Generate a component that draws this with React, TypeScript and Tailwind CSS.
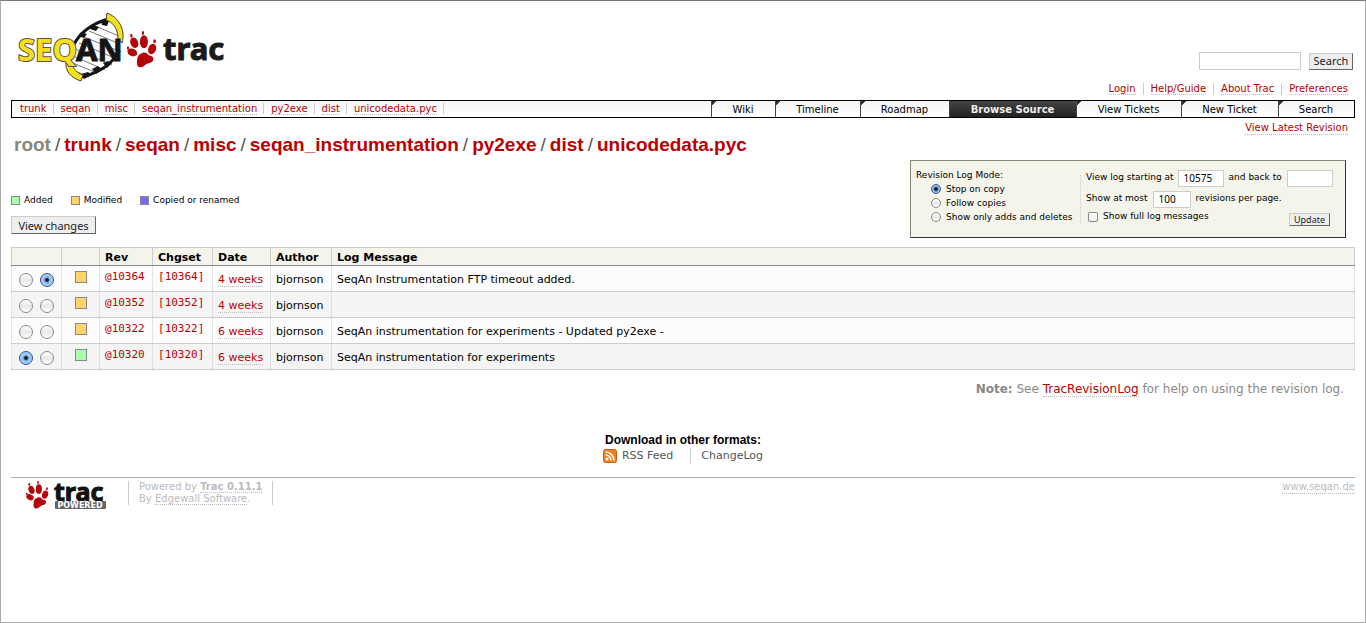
import React from "react";

const link =
  "text-[#b00] border-b border-dotted border-[#bbb] hover:bg-[#eee] hover:text-[#555]";

function Paw({ className }: { className: string }) {
  return (
    <svg viewBox="0 0 32 38" className={className} aria-hidden="true">
      <g fill="#b3060c">
        <path d="M17 22.500C20 21.500 22 23 23.500 25C27 25.500 29 27 28 30C26.500 33 24 32.500 21 34C18 37 15 38.500 12.500 36.500C10.500 34 11.500 32 11.500 29.500C11.500 26 13.500 23.500 17 22.500Z" />
        <ellipse cx="6.500" cy="22" rx="5.200" ry="3.800" transform="rotate(25 6.500 22)" />
        <ellipse cx="8.500" cy="12" rx="4" ry="5.600" transform="rotate(-20 8.500 12)" />
        <ellipse cx="18.500" cy="11" rx="4.200" ry="6.600" />
        <ellipse cx="27" cy="18.500" rx="4" ry="5.600" transform="rotate(20 27 18.500)" />
        <ellipse cx="2" cy="17.500" rx="1.200" ry="1.500" />
        <ellipse cx="5.500" cy="4.700" rx="1.200" ry="2" />
        <ellipse cx="17.500" cy="2" rx="1.200" ry="2" />
        <ellipse cx="29.500" cy="10.500" rx="1.300" ry="2" />
      </g>
    </svg>
  );
}

function SeqanLogo() {
  return (
    <svg viewBox="0 0 108 72" className="h-[72px] w-[108px]" role="img" aria-label="SeqAn">
      <path d="M50 50C54 34 70 14 91 8C105 24 105 44 84 58C74 64 63 67 56 64C50 60 49 56 50 50Z" fill="#fff" />
      <g stroke="#555" strokeWidth=".8" fill="none">
        <path d="M78 14L102 24M72 19L103 32M67 25L104 40M62 31L100 47M58 37L95 53M54 43L88 58M51 49L80 61M51 56L72 65" />
      </g>
      <path d="M91 7C74 12 62 22 56 34" fill="none" stroke="#151515" strokeWidth="3" />
      <path d="M75 13L82 15L79 19L73 17ZM64 20L70 22L67 26L61 24ZM84 9L92 9L90 14L85 13Z" fill="#151515" />
      <path d="M102 38C97 50 84 60 65 65" fill="none" stroke="#151515" strokeWidth="3" />
      <path d="M64 62L71 60L75 63L67 67ZM75 57L81 54L85 58L79 62ZM86 51L91 49L95 51L90 56Z" fill="#151515" />
      <path d="M90 1C101 5 109 17 105 31L101 27C101 19 98 11 89 8Z" fill="#f8df1b" stroke="#444" strokeWidth="1" />
      <path d="M49 50C48 59 54 66 64 69L66 63C60 61 56 57 54 49Z" fill="#f8df1b" stroke="#444" strokeWidth="1" />
      <text x="1" y="49" fontFamily="Noto Sans, sans-serif" fontWeight="700" fontSize="31" fill="#f8df1b" stroke="#555" strokeWidth="2" paintOrder="stroke">SEQ</text>
      <text x="59" y="49" fontFamily="Noto Sans, sans-serif" fontWeight="700" fontSize="31" fill="#151515" stroke="#151515" strokeWidth="1">AN</text>
    </svg>
  );
}

function Radio({ name, label, checked, small }: { name: string; label: string; checked?: boolean; small?: boolean }) {
  return (
    <input
      type="radio"
      name={name}
      aria-label={label}
      defaultChecked={checked}
      className={
        (small ? "size-[10px] " : "size-[14px] ") +
        "shrink-0 appearance-none rounded-full border border-[#8a8a8a] bg-linear-to-b from-white via-[#e8e8e8] to-white checked:border-[#3a4f9c] checked:bg-[radial-gradient(circle,#111_0_1px,#8dc3f5_3px,#b4dcff_100%)]"
      }
    />
  );
}

const crumbs = ["trunk", "seqan", "misc", "seqan_instrumentation", "py2exe", "dist", "unicodedata.pyc"];
const meta = ["Login", "Help/Guide", "About Trac", "Preferences"];
const tabs = [
  { name: "Wiki", width: "w-16" },
  { name: "Timeline", width: "w-[85px]" },
  { name: "Roadmap", width: "w-[89px]" },
  { name: "Browse Source", width: "w-[127px]" },
  { name: "View Tickets", width: "w-[105px]" },
  { name: "New Ticket", width: "w-[97px]" },
  { name: "Search", width: "w-[76px]" },
];
const legend = [
  { name: "Added", color: "bg-[#afa]" },
  { name: "Modified", color: "bg-[#ffd56a]" },
  { name: "Copied or renamed", color: "bg-[#76f]" },
];
const rows = [
  { rev: "10364", age: "4 weeks", msg: "SeqAn Instrumentation FTP timeout added.", color: "bg-[#ffd56a]" },
  { rev: "10352", age: "4 weeks", msg: "", color: "bg-[#ffd56a]" },
  { rev: "10322", age: "6 weeks", msg: "SeqAn instrumentation for experiments - Updated py2exe -", color: "bg-[#ffd56a]" },
  { rev: "10320", age: "6 weeks", msg: "SeqAn instrumentation for experiments", color: "bg-[#afa]" },
];
const modes = ["Stop on copy", "Follow copies", "Show only adds and deletes"];
const button =
  "border border-[#ccc] border-r-[#666] border-b-[#666] bg-[#eee] text-[#222] font-['Noto_Sans',sans-serif] hover:bg-[#ddd]";
const field = "border border-[#ccc] bg-white font-['Noto_Sans',sans-serif] text-[10px] outline-none";
const cell = "border-x border-dotted border-[#ccc] px-[5px]";

export default function App() {
  return (
    <div className="min-h-screen border border-[#aaa] border-t-[#777] bg-white px-[10px] font-['DejaVu_Sans',Verdana,sans-serif] text-[11px] text-black">
      <header>
        <div className="flex h-[78px] items-start justify-between pt-[11px]">
          <a href="#home" className="flex items-start pl-[6px]">
            <SeqanLogo />
            <Paw className="mt-[19px] ml-[1px] h-[37px] w-[31px]" />
            <svg viewBox="0 0 72 48" className="mt-[14px] ml-[5px] h-[48px] w-[72px]" role="img" aria-label="trac">
              <text x="1" y="34" fontFamily="Noto Sans, sans-serif" fontWeight="700" fontSize="31" fill="#1a1a1a" stroke="#1a1a1a" strokeWidth="1">trac</text>
            </svg>
          </a>
          <form className="flex items-center gap-2 pt-10 pr-[2px]" onSubmit={(e) => e.preventDefault()}>
            <input aria-label="Search" type="text" className={`${field} h-[18px] w-[102px]`} />
            <button className={`${button} h-[17px] w-[44px] text-[11px] leading-[14px]`}>Search</button>
          </form>
        </div>
        <nav aria-label="Account" className="flex h-[21px] items-start justify-end pt-1 pr-[7px] text-[10px] leading-[12px]">
          {meta.map((m, i) => (
            <span key={m} className={i ? "ml-[7px] border-l border-[#ccc] pl-[7px]" : ""}>
              <a href="#meta" className={link}>{m}</a>
            </span>
          ))}
        </nav>
        <div className="flex h-[18px] items-stretch justify-between border border-black bg-linear-to-b from-[#f4f4f4] to-white text-[10px]">
          <nav aria-label="Path" className="flex items-center pb-px pl-px leading-[11px]">
            {crumbs.map((c) => (
              <span key={c} className="border-r border-[#ccc] pr-[6px] pl-[7px]">
                <a href="#path" className={link}>{c}</a>
              </span>
            ))}
          </nav>
          <nav aria-label="Main" className="flex">
            {tabs.map((t) => {
              const active = t.name === "Browse Source";
              return (
                <a
                  key={t.name}
                  href="#tab"
                  className={`${t.width} flex items-center justify-center border-l border-[#444] pr-px ${
                    active
                      ? "bg-linear-to-b from-[#444] to-[#222] font-bold text-[#eee]"
                      : "bg-[linear-gradient(135deg,#333_3px,transparent_3px)]"
                  }`}
                >
                  {t.name}
                </a>
              );
            })}
          </nav>
        </div>
      </header>

      <main>
        <div className="flex justify-end pt-1 pr-[7px] text-[10px] leading-[12px]">
          <a href="#latest" className={link}>View Latest Revision</a>
        </div>
        <h1 className="pl-[3px] font-['Liberation_Sans',Arial,sans-serif] text-[19px] leading-[20px] font-bold text-[#b00]">
          <a href="#root" className="text-[#887]">root</a>
          {crumbs.map((c) => (
            <React.Fragment key={c}>
              <span className="px-1 font-normal text-[#555]">/</span>
              <a href="#path">{c}</a>
            </React.Fragment>
          ))}
        </h1>

        <div className="flex items-start justify-between pt-[5px] pr-[9px]">
          <div className="pt-[34px]">
            <ul className="flex gap-[18px] text-[9px] leading-[12px]">
              {legend.map((l) => (
                <li key={l.name} className="flex items-center gap-1">
                  <span className={`size-[9px] border border-[#888] ${l.color}`} />
                  {l.name}
                </li>
              ))}
            </ul>
            <button className={`${button} mt-[10px] h-[18px] w-[85px] pt-px text-[11px] leading-[16px]`}>View changes</button>
          </div>

          <form
            className="flex h-[78px] w-[436px] border border-[#887] border-r-[#333] border-b-[#333] bg-[#f4f4eb] px-[5px] pt-[7px] text-[9px]"
            onSubmit={(e) => e.preventDefault()}
          >
            <fieldset className="h-[56px] w-[165px] border-r border-dotted border-[#ccc]">
              <legend className="leading-[14px]">Revision Log Mode:</legend>
              {modes.map((m, i) => (
                <label key={m} className="flex h-[14px] items-center gap-[5px] pl-[15px] leading-[14px]">
                  <Radio small name="mode" label={m} checked={i === 0} />
                  {m}
                </label>
              ))}
            </fieldset>
            <div className="flex-1 pl-[5px]">
              <div className="flex h-[20px] items-center">
                <label htmlFor="start">View log starting at</label>
                <input id="start" defaultValue="10575" className={`${field} ml-1 h-[17px] w-[46px] px-[5px]`} />
                <label htmlFor="stop" className="ml-[5px]">and back to</label>
                <input id="stop" className={`${field} ml-[5px] h-[17px] w-[46px] px-[5px]`} />
              </div>
              <div className="flex h-[22px] items-center">
                <label htmlFor="limit">Show at most</label>
                <input id="limit" defaultValue="100" className={`${field} mx-[5px] h-[17px] w-[38px] px-[5px]`} />
                <span>revisions per page.</span>
              </div>
              <div className="flex items-start justify-between pr-[10px]">
                <label className="flex h-[14px] items-center gap-[5px] pl-[2px]">
                  <input type="checkbox" className="size-[10px] appearance-none rounded-xs border border-[#888] bg-linear-to-b from-white to-[#eee] checked:bg-[#8dc3f5]" />
                  Show full log messages
                </label>
                <button className={`${button} mt-[3px] h-[13px] w-[41px] border-[#888] text-[9px] leading-[10px]`}>Update</button>
              </div>
            </div>
          </form>
        </div>

        <table className="mt-[9px] w-full border-collapse border-b border-[#ccc]">
          <thead>
            <tr className="h-[18px] bg-[#f4f4eb] text-left *:border *:border-[#ccc] *:border-b-[#888] *:px-[5px] *:pt-[2px] *:leading-[15px]">
              <th className="w-[50px]" aria-label="Compare" />
              <th className="w-[38px]" aria-label="Change" />
              <th className="w-[53px]">Rev</th>
              <th className="w-[60px]">Chgset</th>
              <th className="w-[58px]">Date</th>
              <th className="w-[61px]">Author</th>
              <th>Log Message</th>
            </tr>
          </thead>
          <tbody>
            {rows.map((r, i) => (
              <tr key={r.rev} className={`h-[26px] border-b border-[#ccc] ${i % 2 ? "bg-[#f4f4f4]" : "bg-[#fcfcfc]"}`}>
                <td className={cell}>
                  <div className="flex gap-[7px] pt-[3px] pl-[2px]">
                    <Radio name="old" label={`From ${r.rev}`} checked={i === 3} />
                    <Radio name="new" label={`To ${r.rev}`} checked={i === 0} />
                  </div>
                </td>
                <td className={cell}>
                  <div className={`mx-auto mb-1 size-[12px] border border-[#888] ${r.color}`} />
                </td>
                <td className={`${cell} pb-[2px] font-['DejaVu_Sans_Mono',monospace] text-[#b00]`}>
                  <a href="#rev">@{r.rev}</a>
                </td>
                <td className={`${cell} pb-[2px] font-['DejaVu_Sans_Mono',monospace] text-[#b00]`}>
                  <a href="#changeset">[{r.rev}]</a>
                </td>
                <td className={`${cell} pt-1 whitespace-nowrap`}>
                  <a href="#date" className={link}>{r.age}</a>
                </td>
                <td className={`${cell} pt-1`}>bjornson</td>
                <td className={`${cell} pt-1`}>{r.msg}</td>
              </tr>
            ))}
          </tbody>
        </table>

        <p className="mt-[10px] pr-[11px] text-right text-[12px] leading-[18px] text-[#888]">
          <strong>Note:</strong> See <a href="#help" className={link}>TracRevisionLog</a> for help on using the revision log.
        </p>

        <section className="mt-[35px] flex flex-col items-center">
          <h2 className="font-['Liberation_Sans',Arial,sans-serif] text-[12px] leading-[14px] font-bold">Download in other formats:</h2>
          <div className="mt-[2px] flex h-[14px] items-center text-[11px] text-[#555]">
            <a href="#rss" className="flex items-center gap-[5px] pr-[17px]">
              <svg viewBox="0 0 14 14" className="size-[14px]" aria-hidden="true">
                <rect x=".5" y=".5" width="13" height="13" rx="2" fill="#f08020" stroke="#d05a08" />
                <circle cx="4" cy="10" r="1.500" fill="#fff" />
                <path d="M2.500 6A5.500 5.500 0 0 1 8 11.500M2.500 3A8.500 8.500 0 0 1 11 11.500" fill="none" stroke="#fff" strokeWidth="1.600" />
              </svg>
              RSS Feed
            </a>
            <a href="#changelog" className="border-l border-[#ccc] pl-[10px]">ChangeLog</a>
          </div>
        </section>
      </main>

      <footer className="mt-[14px] flex items-start border-t border-[#aaa] pt-[3px] text-[10px] leading-[12px] text-[#bbb]">
        <a href="#trac" className="flex w-[117px] pl-[13px]">
          <Paw className="h-[28px] w-[26px]" />
          <svg viewBox="0 0 60 30" className="ml-[3px] h-[30px] w-[60px] overflow-visible" role="img" aria-label="trac powered">
            <text x="1" y="20" fontFamily="Noto Sans, sans-serif" fontWeight="700" fontSize="25" fill="#111" stroke="#111" strokeWidth="1">trac</text>
            <rect x="2" y="20" width="51" height="8" rx="1" fill="#666" />
            <text x="27" y="27" textAnchor="middle" fontFamily="DejaVu Sans, sans-serif" fontWeight="700" fontSize="8" fill="#fff">POWERED</text>
          </svg>
        </a>
        <p className="border-x border-[#ccc] px-[10px]">
          Powered by <a href="#trac" className="border-b border-dotted border-[#bbb] font-bold">Trac 0.11.1</a>
          <br />
          By <a href="#edgewall" className="border-b border-dotted border-[#bbb]">Edgewall Software</a>.
        </p>
        <a href="#seqan" className="ml-auto border-b border-dotted border-[#bbb]">www.seqan.de</a>
      </footer>
    </div>
  );
}
